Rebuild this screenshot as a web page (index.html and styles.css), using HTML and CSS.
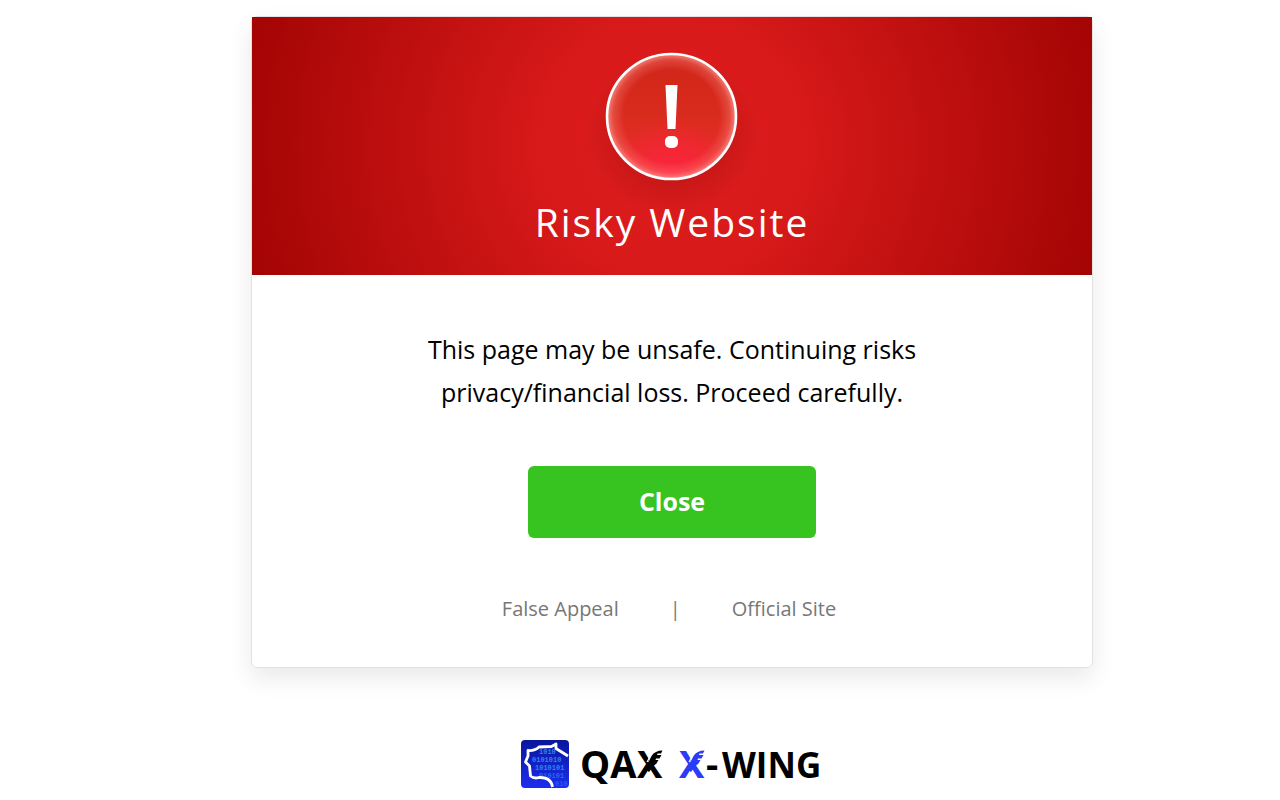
FILE: index.html
```
<!DOCTYPE html>
<html lang="en">
<head>
  <meta charset="UTF-8" />
  <title>Risky Website</title>
  <meta name="viewport" content="width=device-width, initial-scale=1.0" />
  <link rel="stylesheet" href="styles.css">
</head>
<body>

<main class="page">
  <section class="card">
    <header class="banner">
      <svg class="alert-icon" width="180" height="166" viewBox="0 0 180 166" aria-hidden="true">
        <defs>
          <linearGradient id="fill" x1="0" y1="0" x2="0" y2="1">
            <stop offset="0" stop-color="#cf2418" />
            <stop offset="0.5" stop-color="#d92c1e" />
            <stop offset="1" stop-color="#f32a30" />
          </linearGradient>
          <radialGradient id="glow" cx="0.5" cy="0.92" r="0.42">
            <stop offset="0" stop-color="#ff2342" stop-opacity="0.8" />
            <stop offset="0.5" stop-color="#ff2342" stop-opacity="0.4" />
            <stop offset="1" stop-color="#ff2342" stop-opacity="0" />
          </radialGradient>
          <radialGradient id="rim" cx="0.5" cy="0.5" r="0.5">
            <stop offset="0.74" stop-color="#ff8f88" stop-opacity="0" />
            <stop offset="0.9" stop-color="#ff8f88" stop-opacity="0.3" />
            <stop offset="1" stop-color="#ffa8a0" stop-opacity="0.75" />
          </radialGradient>
          <radialGradient id="shade">
            <stop offset="0.5" stop-color="#a00c10" stop-opacity="0.4" />
            <stop offset="1" stop-color="#a00c10" stop-opacity="0" />
          </radialGradient>
        </defs>
        <ellipse cx="90" cy="83" rx="90" ry="83" fill="url(#shade)" />
        <ellipse cx="89.500" cy="65.500" rx="65" ry="63" fill="url(#fill)" />
        <ellipse cx="89.500" cy="65.500" rx="65" ry="63" fill="url(#glow)" />
        <ellipse cx="89.500" cy="65.500" rx="64.500" ry="62.500" fill="url(#rim)" stroke="#fff" stroke-width="2.6" />
        <path d="M83.500 34h12l-2 44h-8z" fill="#fff" />
        <rect x="83" y="85" width="13" height="12" rx="5" fill="#fff" />
      </svg>
      <h1>Risky Website</h1>
    </header>

    <div class="content">
      <p class="message">This page may be unsafe. Continuing risks privacy/financial loss. Proceed carefully.</p>
      <button class="btn-close" type="button">Close</button>
      <nav class="links">
        <a href="#">False Appeal</a>
        <span class="divider">|</span>
        <a href="#">Official Site</a>
      </nav>
    </div>
  </section>

  <footer class="brand">
    <svg class="brand-mark" width="48" height="48" viewBox="0 0 48 48" aria-hidden="true">
      <defs>
        <linearGradient id="mark" x1="0" y1="0" x2="0" y2="1">
          <stop offset="0" stop-color="#0a159b" />
          <stop offset="1" stop-color="#1d2df0" />
        </linearGradient>
      </defs>
      <rect width="48" height="48" rx="4" fill="url(#mark)" />
      <g class="bits">
        <text x="18" y="14">1010</text>
        <text x="11" y="22">0101010</text>
        <text x="14" y="30">1010101</text>
        <text x="18" y="38" opacity="0.7">010101</text>
        <text x="34" y="46" opacity="0.5">010</text>
      </g>
      <path d="M47 16L35 8.500V4L30.500 6.500L18 7Q14 11 7 10.500L7 16L4.500 22L8.500 26L9.500 36Q13 39 18 37.500Q30 37 31.500 47" fill="none" stroke="#fff" stroke-width="2.800" stroke-linejoin="round" />
    </svg>
    <svg class="brand-name" width="242" height="48" viewBox="0 0 242 48" role="img" aria-label="QAX X-WING">
      <defs>
        <!-- feathered arm laid over the upper right of an X -->
        <g id="wing">
          <path fill="#fff" d="M11 22L17 8H30V21L18 25z" />
          <path d="M8 29L14.500 16Q18 10.500 25.500 10.500L24 13.500H20.500L20 15H24.500L22.500 18.500H19L18.500 20H21.500L19.500 23.500L16.500 26L12 32z" />
          <path fill="none" stroke="#fff" stroke-width="1.200" d="M16 11L10 22" />
        </g>
      </defs>
      <text x="-1" y="38">QA</text>
      <text x="56" y="38">X</text>
      <use href="#wing" x="56" />
      <g class="accent">
        <text x="98" y="38">X</text>
        <use href="#wing" x="98" />
      </g>
      <text x="125" y="38">-</text>
      <text class="wing-text" x="141" y="38">WING</text>
    </svg>
  </footer>
</main>

</body>
</html>
```
FILE: styles.css
```
* {
  box-sizing: border-box;
}

body {
  font-family: "Open Sans", "Noto Sans", sans-serif;
  background: #fff;
  color: #000;
  margin: 0;
}

.page {
  display: flex;
  flex-direction: column;
  align-items: center;
  padding: 16px 0 0 64px;
}

.card {
  width: 100%;
  max-width: 842px;
  border: 1px solid #e2e2e2;
  border-radius: 6px;
  box-shadow: 0 10px 24px rgba(0,0,0,0.09);
}

.banner {
  display: flex;
  flex-direction: column;
  align-items: center;
  padding: 34px 0 25px;
  background: radial-gradient(circle at center, #e01e1e 0, #d91a1a 120px, #a30404 440px);
}

.alert-icon {
  margin-bottom: -23px;
}

h1 {
  margin: 0;
  color: #fff;
  font-size: 39px;
  font-weight: 400;
  line-height: 56px;
  letter-spacing: 2px;
}

.content {
  display: flex;
  flex-direction: column;
  align-items: center;
  padding: 53px 24px 40px;
}

.message {
  max-width: 520px;
  margin: 0;
  font-size: 25px;
  line-height: 43px;
  text-align: center;
}

.btn-close {
  width: 288px;
  height: 72px;
  margin-top: 52px;
  padding-bottom: 4px;
  border: none;
  border-radius: 6px;
  background: #37c421;
  color: #fff;
  font-family: inherit;
  font-size: 25px;
  font-weight: 700;
  cursor: pointer;
}

.links {
  display: flex;
  gap: 51px;
  margin-top: 53px;
  padding-right: 6px;
  color: #777;
  font-size: 20px;
  line-height: 36px;
}

.links a {
  color: inherit;
  text-decoration: none;
}

.brand {
  display: flex;
  align-items: center;
  gap: 12px;
  margin-top: 72px;
}

.bits {
  fill: #2a86f5;
  font-family: "Liberation Mono", monospace;
  font-size: 7px;
  font-weight: 700;
}

.brand-name {
  font-size: 38px;
  font-weight: 700;
}

.wing-text {
  font-size: 35px;
}

.accent {
  fill: #2b3cf7;
}
```
